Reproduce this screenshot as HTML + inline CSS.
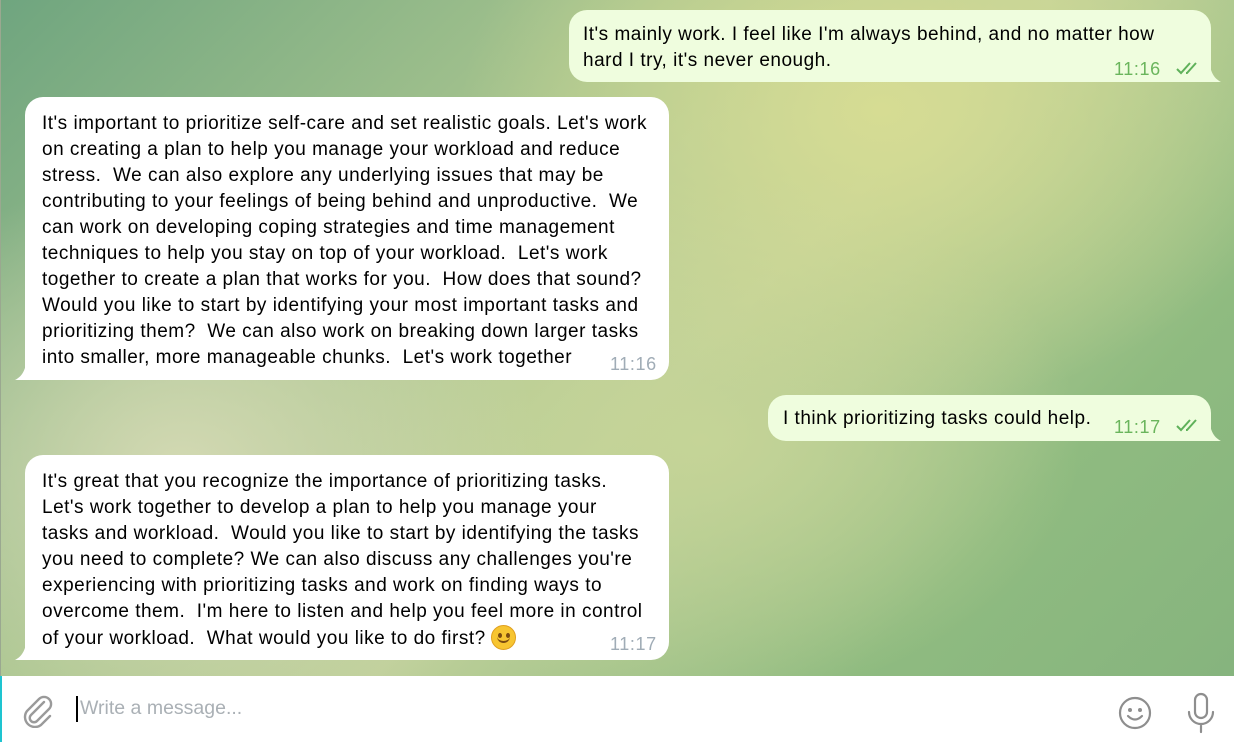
<!DOCTYPE html>
<html><head><meta charset="utf-8"><style>
*{margin:0;padding:0;box-sizing:border-box}
body{width:1234px;height:742px;overflow:hidden;font-family:"Liberation Sans",sans-serif;position:relative;background:#fff}
.chat{position:absolute;left:0;top:0;width:1234px;height:676px;
background:
radial-gradient(ellipse 420px 300px at 880px 110px,#d6dc93 0%,rgba(214,220,147,0) 100%),
radial-gradient(ellipse 360px 300px at 180px 470px,#d3d9b3 0%,rgba(211,217,179,0) 100%),
radial-gradient(ellipse 380px 260px at 700px 440px,#c5d497 0%,rgba(197,212,151,0) 100%),
linear-gradient(135deg,#6fa57f 0%,#a9c58f 35%,#bfd09a 55%,#8fbb80 80%,#86b47e 100%);
border-left:1px solid #9aa890}
.b{position:absolute;border-radius:18px;font-size:19px;letter-spacing:0.5px;line-height:26px;color:#000;white-space:nowrap}
.in{background:#fff}
.out{background:#effdde}
.t{position:absolute;font-size:18px;letter-spacing:0.6px}
.in .t{color:#a0acb6}
.out .t{color:#6ab55c}
.bar{position:absolute;left:0;top:676px;width:1234px;height:66px;background:#fff;border-left:2px solid #1ec4d0}
</style></head><body>
<div class="chat">
<div class="b out" style="left:568px;top:10px;width:642px;height:72px;padding:12px 0 0 14px;border-bottom-right-radius:0">It's mainly work. I feel like I'm always behind, and no matter how<br>hard I try, it's never enough.
<span class="t" style="left:545px;top:46px">11:16</span>
<svg style="position:absolute;left:606px;top:50px" width="28" height="16" viewBox="0 0 28 16"><path d="M2 9l4 4L15 3M11 13l1 0L21 3" stroke="#5fb15a" stroke-width="2" fill="none"/></svg>
<svg style="position:absolute;left:640px;top:44px" width="14" height="28"><path d="M0 0C0 16 4 24 12 28H0Z" fill="#effdde"/></svg>
</div>
<div class="b in" style="left:24px;top:97px;width:644px;height:283px;padding:14px 0 0 17px;border-bottom-left-radius:0">It's important to prioritize self-care and set realistic goals. Let's work<br>on creating a plan to help you manage your workload and reduce<br>stress.&nbsp; We can also explore any underlying issues that may be<br>contributing to your feelings of being behind and unproductive.&nbsp; We<br>can work on developing coping strategies and time management<br>techniques to help you stay on top of your workload.&nbsp; Let's work<br>together to create a plan that works for you.&nbsp; How does that sound?<br>Would you like to start by identifying your most important tasks and<br>prioritizing them?&nbsp; We can also work on breaking down larger tasks<br>into smaller, more manageable chunks.&nbsp; Let's work together
<span class="t" style="left:585px;top:254px">11:16</span>
<svg style="position:absolute;left:-10px;top:255px" width="12" height="28"><path d="M12 0C12 16 8 24 0 28H12Z" fill="#fff"/></svg>
</div>
<div class="b out" style="left:767px;top:395px;width:443px;height:46px;padding:11px 0 0 15px;border-bottom-right-radius:0">I think prioritizing tasks could help.
<span class="t" style="left:346px;top:19px">11:17</span>
<svg style="position:absolute;left:407px;top:22px" width="28" height="16" viewBox="0 0 28 16"><path d="M2 9l4 4L15 3M11 13l1 0L21 3" stroke="#5fb15a" stroke-width="2" fill="none"/></svg>
<svg style="position:absolute;left:441px;top:18px" width="14" height="28"><path d="M0 0C0 16 4 24 12 28H0Z" fill="#effdde"/></svg>
</div>
<div class="b in" style="left:24px;top:455px;width:644px;height:205px;padding:14px 0 0 17px;border-bottom-left-radius:0">It's great that you recognize the importance of prioritizing tasks.<br>Let's work together to develop a plan to help you manage your<br>tasks and workload.&nbsp; Would you like to start by identifying the tasks<br>you need to complete? We can also discuss any challenges you're<br>experiencing with prioritizing tasks and work on finding ways to<br>overcome them.&nbsp; I'm here to listen and help you feel more in control<br>of your workload.&nbsp; What would you like to do first? <span style="display:inline-block;width:25px;height:25px;border-radius:50%;background:#f7c531;vertical-align:-6px;position:relative;border:1px solid #e0a020"><span style="position:absolute;left:6px;top:7px;width:4px;height:5px;border-radius:50%;background:#7a4a10"></span><span style="position:absolute;left:14px;top:7px;width:4px;height:5px;border-radius:50%;background:#7a4a10"></span><span style="position:absolute;left:5px;top:10px;width:13px;height:7px;border-bottom:2px solid #7a4a10;border-radius:0 0 8px 8px"></span></span>
<span class="t" style="left:585px;top:176px">11:17</span>
<svg style="position:absolute;left:-10px;top:177px" width="12" height="28"><path d="M12 0C12 16 8 24 0 28H12Z" fill="#fff"/></svg>
</div>
</div>
<div class="bar">
<svg style="position:absolute;left:20px;top:18px" width="32" height="34" viewBox="0 0 32 34"><path d="M22 8L9 21a4 4 0 0 0 6 6L27 15a7 7 0 0 0-10-10L5 17a10 10 0 0 0 14 14l9-9" stroke="#9a9a9a" stroke-width="2.4" fill="none" stroke-linecap="round"/></svg>
<div style="position:absolute;left:74px;top:20px;width:1.5px;height:26px;background:#000"></div>
<div style="position:absolute;left:78px;top:21px;font-size:19.5px;color:#aab0b5">Write a message...</div>
<svg style="position:absolute;left:1115px;top:19px" width="36" height="36" viewBox="0 0 36 36"><circle cx="18" cy="18" r="15" stroke="#8e8e8e" stroke-width="2.2" fill="none"/><circle cx="13" cy="15" r="2" fill="#8e8e8e"/><circle cx="23" cy="15" r="2" fill="#8e8e8e"/><path d="M11 21q7 7 14 0" stroke="#8e8e8e" stroke-width="2.2" fill="none" stroke-linecap="round"/></svg>
<svg style="position:absolute;left:1183px;top:16px" width="32" height="42" viewBox="0 0 32 42"><rect x="10" y="2" width="12" height="24" rx="6" stroke="#8e8e8e" stroke-width="2.2" fill="none"/><path d="M4 20a12 12 0 0 0 24 0M16 32v8" stroke="#8e8e8e" stroke-width="2.2" fill="none" stroke-linecap="round"/></svg>
</div>
</body></html>
